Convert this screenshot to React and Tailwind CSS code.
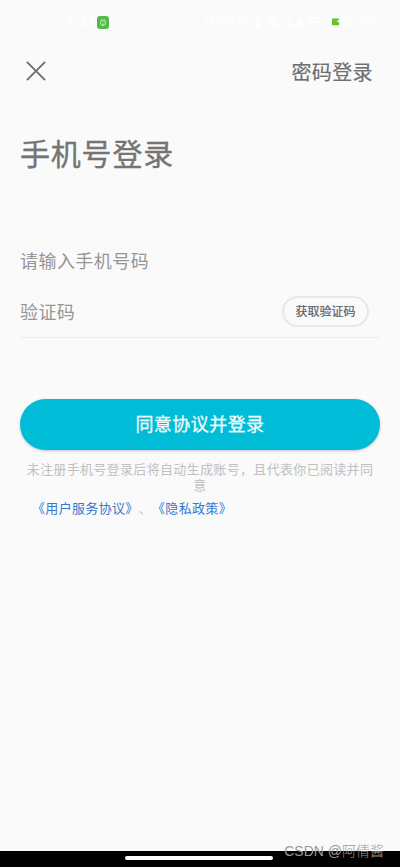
import { useState } from 'react';

function StatusBar() {
  return (
    <div className="flex h-11 items-center pl-[65px] pr-[19px] font-[Roboto,sans-serif] leading-none text-white">
      <span className="w-[32px] text-[15px] font-medium">9:37</span>
      <span className="flex h-[13px] w-3 items-center justify-center rounded-[3px] bg-[#55b947]">
        <svg viewBox="0 0 12 13" className="h-[13px] w-3" fill="none" stroke="#d5f3cc" strokeWidth="0.8">
          <path d="M4 3.2 5 4.4M8 3.2 7 4.4" />
          <ellipse cx="6" cy="6.8" rx="2.5" ry="2.8" />
          <path d="M4.8 6h.6M6.7 6h.6M5 8.2h2" />
        </svg>
      </span>
      <div className="ml-auto flex items-center">
        <span className="w-[46px] text-[15px]">0.0K/s</span>
        <svg viewBox="0 0 12 14" className="h-[13px] w-3" fill="none" stroke="currentColor" strokeWidth="1.5">
          <path d="m2 4 7 6-3 3V1l3 3-7 6" />
        </svg>
        <svg viewBox="0 0 14 14" className="ml-[3px] h-[13px] w-3.5" fill="none" stroke="currentColor" strokeWidth="1.5">
          <path d="M2 11h10M3.5 11V6a3.5 3.5 0 0 1 7 0v5M1 1l12 12M6 13h2" />
        </svg>
        <svg viewBox="0 0 20 14" className="ml-[3px] h-[13px] w-5" fill="none" stroke="currentColor" strokeWidth="2">
          <path d="M2 7V2M6 7V2M6 13v-3M10 13V8M14 13V5M18 13V2" />
        </svg>
        <svg viewBox="0 0 16 12" className="ml-1 h-3 w-4" fill="none" stroke="currentColor" strokeWidth="2">
          <path d="M1 4a10 10 0 0 1 14 0M4 7a6 6 0 0 1 8 0M7 10h2" />
        </svg>
        <svg viewBox="0 0 24 8" className="ml-2 h-2 w-6">
          <path d="M1 .5h7v1L5.5 4H8v3.3H1z" fill="#62c52f" />
          <path d="M11 1h9v6h-9M22 3v2" fill="none" stroke="white" />
        </svg>
        <span className="ml-0.5 flex w-6 items-end text-[14px]">
          37<span className="text-[9px]">%</span>
        </span>
      </div>
    </div>
  );
}

export default function App() {
  const [phone, setPhone] = useState('');
  const [code, setCode] = useState('');

  return (
    <div className="relative flex h-[867px] w-full flex-col overflow-hidden bg-[#fafafa] font-['Noto_Sans_CJK_SC','Noto_Sans',sans-serif] [text-spacing-trim:space-all]">
      <StatusBar />

      <header className="flex h-[54px] items-center justify-between pl-[26px] pr-[27px] text-[#6f6f70]">
        <button aria-label="关闭">
          <svg viewBox="0 0 20 20" className="h-5 w-5" fill="none" stroke="currentColor" strokeWidth="1.9" strokeLinecap="round">
            <path d="M1.4 1.4 18.6 18.6M18.6 1.4 1.4 18.6" />
          </svg>
        </button>
        <button className="pt-0.5 text-[20px] tracking-[0.4px] [-webkit-text-stroke:0.2px_#6f6f70]">密码登录</button>
      </header>

      <main className="flex grow flex-col px-5">
        <h1 className="mt-[30px] text-[30px] leading-12 tracking-[0.8px] text-[#747474] [-webkit-text-stroke:0.35px_#747474]">手机号登录</h1>

        <form className="mt-[58px]" onSubmit={(e) => e.preventDefault()}>
          <input
            value={phone}
            onChange={(e) => setPhone(e.target.value)}
            placeholder="请输入手机号码"
            className="block h-[51px] w-full border-b border-[#f8f8f8] pt-px text-[18px] tracking-[0.45px] outline-none placeholder:text-[#969696]"
          />
          <div className="flex h-[53px] items-center border-b border-[#eeeeee] pr-[11px]">
            <input
              value={code}
              onChange={(e) => setCode(e.target.value)}
              placeholder="验证码"
              className="min-w-0 grow text-[18px] tracking-[0.4px] outline-none placeholder:text-[#969696]"
            />
            <button type="button" className="h-[31px] w-[87px] shrink-0 rounded-full border-2 border-[#e8e8e8] pb-px text-xs text-[#5c6067] [-webkit-text-stroke:0.2px_#5c6067]">
              获取验证码
            </button>
          </div>
          <button className="mt-[61px] h-[51px] w-full rounded-full bg-[#00bcd7] pb-0.5 text-[18px] tracking-[0.45px] text-[#effcfd] shadow-[0_1px_3px_rgba(0,0,0,0.22)] [-webkit-text-stroke:0.3px_#effcfd]">
            同意协议并登录
          </button>
        </form>

        <p className="mt-[11px] px-1.5 text-center text-[13px] leading-[15.5px] tracking-[0.33px] text-[#c0c0c0]">
          未注册手机号登录后将自动生成账号，且代表你已阅读并同意
        </p>
        <p className="mt-1.5 pl-3 text-[13px] leading-5 tracking-[0.33px] text-[#c0c0c0]">
          <a className="text-[#3478cd]">《用户服务协议》</a>、<a className="text-[#3478cd]">《隐私政策》</a>
        </p>
      </main>

      <footer className="flex h-4 items-start justify-center bg-black pr-[2px] pt-[5px]">
        <div className="h-1 w-[148px] rounded-full bg-white" />
      </footer>
      <span className="absolute right-4 bottom-1 font-['Liberation_Sans','Noto_Sans_CJK_SC',sans-serif] text-[14px] leading-6 font-light text-[#999999]">CSDN @阿倩酱</span>
    </div>
  );
}
